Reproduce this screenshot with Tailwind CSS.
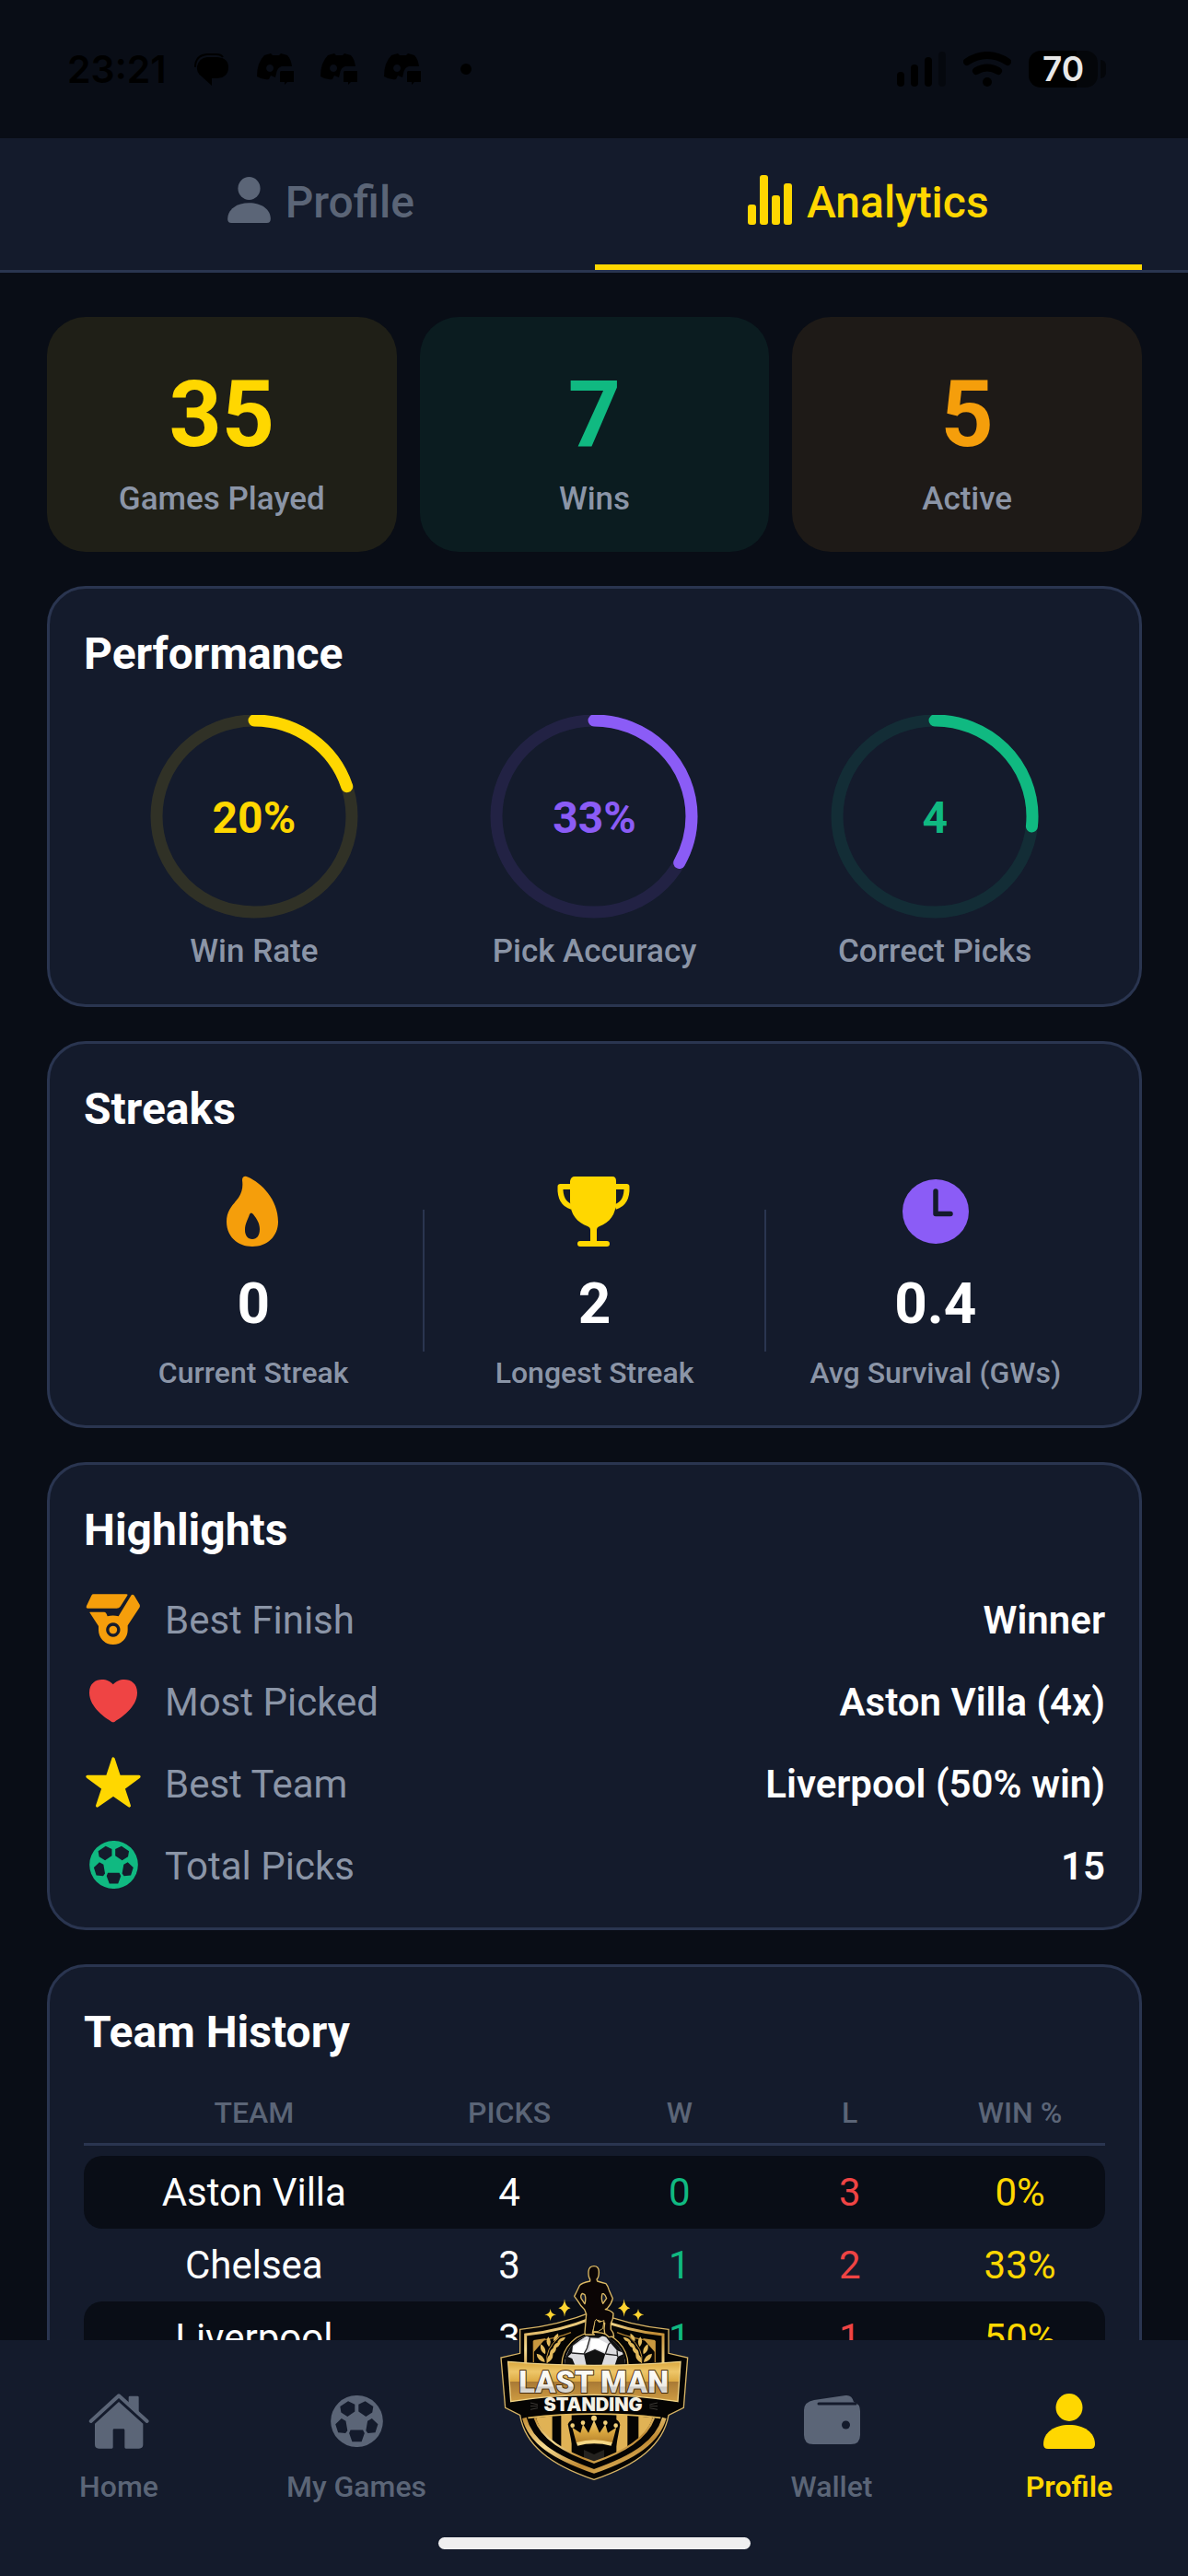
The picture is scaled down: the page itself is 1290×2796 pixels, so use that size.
<!DOCTYPE html>
<html lang="en">
<head>
  <meta charset="UTF-8">
  <meta name="viewport" content="width=device-width, initial-scale=1.0">
  <title>Last Man Standing - Analytics</title>
  <script src="https://cdn.jsdelivr.net/npm/@tailwindcss/browser@4"></script>
</head>
<body class="bg-[#090d16] font-['Roboto',sans-serif] text-white">

<!-- shared icons -->
<svg class="hidden">
  <symbol id="person" viewBox="0 0 56 60">
    <ellipse cx="28" cy="15" rx="14.5" ry="15"/>
    <path d="M0 55C0 42 12 34 28 34S56 42 56 55Q56 60 51 60H5Q0 60 0 55Z"/>
  </symbol>
  <symbol id="ball" viewBox="111 863 156 154">
    <path fill-rule="evenodd" d="M111 940a78 77 0 1 0 156 0a78 77 0 1 0 -156 0Z
      M163 880L183 890V911L161 926L142 914L139 896Z
      M214 880L194 890V911L216 926L235 914L238 896Z
      M125 949L143 932L156 939L161 968L155 976L133 974Z
      M252 949L234 932L221 939L216 968L222 976L244 974Z
      M170 966H207L212 976L203 1001H175L166 976Z"/>
  </symbol>
  <symbol id="chat-app" viewBox="0 0 41 34">
    <path d="M8 2L15 0L17 2H24L26 0L33 2Q37 6 38 14H27Q22 15 21 22L20 26L15 24L13 28Q6 29 0 25Q0 10 8 2ZM14 12a4 4 0 1 0 .1 0Z" fill-rule="evenodd"/>
    <path d="M26 19H40V31H33L30 34V31H25V20Z"/>
  </symbol>
</svg>

<div class="flex h-screen flex-col">

  <!-- status bar -->
  <div class="flex h-[150px] shrink-0 items-center justify-between pr-[89px] pl-[73px] font-['Inter',sans-serif] text-black">
    <div class="flex items-center">
      <span class="w-[138px] text-[41px] leading-[50px] font-semibold">23:21</span>
      <svg class="mr-[31px] h-[35px] w-[37px]" viewBox="0 0 37 35" fill="currentColor">
        <path d="M14 4H25Q37 5 37 15Q37 26 25 27H19V35L8 25Q2 21 3 14Q5 5 14 4Z"/>
        <path d="M1 15Q1 2 14 1H24Q29 1 31 4" fill="none" stroke="currentColor" stroke-width="2"/>
      </svg>
      <svg class="mr-7 h-[34px] w-[41px]" fill="currentColor"><use href="#chat-app"/></svg>
      <svg class="mr-7 h-[34px] w-[41px]" fill="currentColor"><use href="#chat-app"/></svg>
      <svg class="mr-[42px] h-[34px] w-[41px]" fill="currentColor"><use href="#chat-app"/></svg>
      <span class="size-3 rounded-full bg-black"></span>
    </div>
    <div class="flex items-center">
      <svg class="mr-[18px] h-[38px] w-[54px]" viewBox="0 0 54 38">
        <rect x="0" y="22" width="8" height="16" rx="4"/>
        <rect x="15" y="14" width="8" height="24" rx="4"/>
        <rect x="30" y="6" width="8" height="32" rx="4"/>
        <rect x="45" y="0" width="8" height="38" rx="4" fill-opacity=".35"/>
      </svg>
      <svg class="mr-[19px] h-[38px] w-[52px]" viewBox="0 0 52 38" fill="none" stroke="#000" stroke-width="8" stroke-linecap="round">
        <path d="M4 11Q26 -3 48 11M14 21Q26 14 38 21"/>
        <circle cx="26" cy="33" r="5" fill="#000" stroke="none"/>
      </svg>
      <span class="flex h-10 w-[75px] items-center justify-center rounded-[13px] bg-linear-to-r from-black from-70% to-[#04060a] to-70% text-[37px] leading-10 font-semibold text-[#e8e8e8]">70</span>
      <span class="ml-[3px] h-5 w-[6px] rounded-r-full bg-[#04060a]"></span>
    </div>
  </div>

  <!-- tabs -->
  <div class="flex shrink-0 border-b-3 border-[#2a3550] bg-[#141b2c] pr-[50px] pl-[51px]">
    <button class="flex flex-1 items-center justify-center gap-4 border-b-6 border-transparent pt-9 pb-[33px] text-[48px] leading-[68px] font-medium text-[#5b6577]">
      <svg class="mb-1.5 h-[50px] w-[47px]" fill="currentColor"><use href="#person"/></svg>
      Profile
    </button>
    <button class="flex flex-1 items-center justify-center gap-4 border-b-6 border-[#ffd700] pt-9 pb-[33px] text-[48px] leading-[68px] font-medium text-[#ffd700]">
      <svg class="mb-1.5 h-[54px] w-[48px]" viewBox="0 0 48 54" fill="currentColor">
        <rect x="0" y="32" width="9" height="22" rx="3"/>
        <rect x="13" y="0" width="9" height="54" rx="3"/>
        <rect x="26" y="22" width="9" height="32" rx="3"/>
        <rect x="39" y="9" width="9" height="45" rx="3"/>
      </svg>
      Analytics
    </button>
  </div>

  <main class="min-h-0 flex-1 space-y-[37px] overflow-hidden pt-12 pr-[50px] pl-[51px]">

    <!-- totals -->
    <section class="grid grid-cols-3 gap-[25px] text-center">
      <div class="rounded-[42px] bg-[#1f1f17] py-9">
        <p class="text-[100px] leading-[140px] font-bold text-[#ffd700]">35</p>
        <p class="text-[35px] leading-[43px] font-medium text-[#8b95a7]">Games Played</p>
      </div>
      <div class="rounded-[42px] bg-[#0b1c20] py-9">
        <p class="text-[100px] leading-[140px] font-bold text-[#10b981]">7</p>
        <p class="text-[35px] leading-[43px] font-medium text-[#8b95a7]">Wins</p>
      </div>
      <div class="rounded-[42px] bg-[#1e1a17] py-9">
        <p class="text-[100px] leading-[140px] font-bold text-[#f59e0b]">5</p>
        <p class="text-[35px] leading-[43px] font-medium text-[#8b95a7]">Active</p>
      </div>
    </section>

    <!-- performance -->
    <section class="rounded-[42px] border-3 border-[#2a3550] bg-[#141b2c] p-[37px]">
      <h2 class="mb-8 text-[48px] leading-[68px] font-bold">Performance</h2>
      <div class="grid grid-cols-3 text-center">
        <div class="flex flex-col items-center">
          <div class="grid place-items-center text-[#ffd700]">
            <svg class="col-start-1 row-start-1 h-[221px] w-[226px]" viewBox="0 0 226 221" fill="none" stroke="currentColor" stroke-width="13">
              <ellipse cx="113" cy="110" rx="106" ry="104" stroke-opacity=".12"/>
              <path d="M113 6A106 104 0 0 1 219 110A106 104 0 0 1 113 214A106 104 0 0 1 7 110A106 104 0 0 1 113 6" pathLength="100" stroke-dasharray="20 100" stroke-linecap="round"/>
            </svg>
            <span class="col-start-1 row-start-1 pt-[3px] text-[48px] font-bold">20%</span>
          </div>
          <p class="mt-[15px] text-[35px] leading-[41px] font-medium text-[#8b95a7]">Win Rate</p>
        </div>
        <div class="flex flex-col items-center">
          <div class="grid place-items-center text-[#8b5cf6]">
            <svg class="col-start-1 row-start-1 h-[221px] w-[226px]" viewBox="0 0 226 221" fill="none" stroke="currentColor" stroke-width="13">
              <ellipse cx="113" cy="110" rx="106" ry="104" stroke-opacity=".12"/>
              <path d="M113 6A106 104 0 0 1 219 110A106 104 0 0 1 113 214A106 104 0 0 1 7 110A106 104 0 0 1 113 6" pathLength="100" stroke-dasharray="33 100" stroke-linecap="round"/>
            </svg>
            <span class="col-start-1 row-start-1 pt-[3px] text-[48px] font-bold">33%</span>
          </div>
          <p class="mt-[15px] text-[35px] leading-[41px] font-medium text-[#8b95a7]">Pick Accuracy</p>
        </div>
        <div class="flex flex-col items-center">
          <div class="grid place-items-center text-[#10b981]">
            <svg class="col-start-1 row-start-1 h-[221px] w-[226px]" viewBox="0 0 226 221" fill="none" stroke="currentColor" stroke-width="13">
              <ellipse cx="113" cy="110" rx="106" ry="104" stroke-opacity=".12"/>
              <path d="M113 6A106 104 0 0 1 219 110A106 104 0 0 1 113 214A106 104 0 0 1 7 110A106 104 0 0 1 113 6" pathLength="100" stroke-dasharray="26.7 100" stroke-linecap="round"/>
            </svg>
            <span class="col-start-1 row-start-1 pt-[3px] text-[48px] font-bold">4</span>
          </div>
          <p class="mt-[15px] text-[35px] leading-[41px] font-medium text-[#8b95a7]">Correct Picks</p>
        </div>
      </div>
    </section>

    <!-- streaks -->
    <section class="rounded-[42px] border-3 border-[#2a3550] bg-[#141b2c] p-[37px]">
      <h2 class="mb-8 text-[48px] leading-[68px] font-bold">Streaks</h2>
      <div class="flex items-center text-center">
        <div class="flex flex-1 flex-col items-center">
          <svg class="size-[90px]" viewBox="0 0 90 90" fill="#f59e0b">
            <path fill-rule="evenodd" d="M33 11C33 7 36 6 39 7.5C54 14 72 32 72 56C72 72 60 83 44 83C28 83 16 72 16 56C16 43 24 37 29 30C33 24 34 18 33 11ZM41 48C39 54 36 58 36 65C36 71 39 75 44 75C49 75 52 71 52 64C52 58 49 53 45 48Q42.500 45 41 48Z"/>
          </svg>
          <p class="mt-5 text-[62px] leading-[70px] font-bold">0</p>
          <p class="mt-5 text-[32px] leading-10 font-medium text-[#8b95a7]">Current Streak</p>
        </div>
        <div class="h-[154px] w-[2px] bg-[#2a3550]"></div>
        <div class="flex flex-1 flex-col items-center">
          <svg class="size-[90px]" viewBox="0 0 90 90" fill="#ffd700">
            <path d="M24 7H65Q69 7 69 12V34C69 48 62 57 51 61Q48 62 48 65V77H59Q62 77 62 80T59 83H30Q27 83 27 80T30 77H41V65Q41 62 38 61C27 57 19 48 19 34V12Q20 7 24 7Z"/>
            <path d="M20 18H8.500C8 29 11 37 21 40M68 18H80.500C81 29 78 37 68 40" fill="none" stroke="#ffd700" stroke-width="6" stroke-linejoin="round"/>
          </svg>
          <p class="mt-5 text-[62px] leading-[70px] font-bold">2</p>
          <p class="mt-5 text-[32px] leading-10 font-medium text-[#8b95a7]">Longest Streak</p>
        </div>
        <div class="h-[154px] w-[2px] bg-[#2a3550]"></div>
        <div class="flex flex-1 flex-col items-center">
          <svg class="size-[90px]" viewBox="0 0 90 90">
            <ellipse cx="45" cy="45" rx="36" ry="35" fill="#8b5cf6"/>
            <path d="M45 23V47.500H61" fill="none" stroke="#141b2c" stroke-width="5.500" stroke-linecap="round" stroke-linejoin="round"/>
          </svg>
          <p class="mt-5 text-[62px] leading-[70px] font-bold">0.4</p>
          <p class="mt-5 text-[32px] leading-10 font-medium text-[#8b95a7]">Avg Survival (GWs)</p>
        </div>
      </div>
    </section>

    <!-- highlights -->
    <section class="rounded-[42px] border-3 border-[#2a3550] bg-[#141b2c] px-[37px] pt-[37px] pb-[34px]">
      <h2 class="mb-8 text-[48px] leading-[68px] font-bold">Highlights</h2>
      <dl class="space-y-[25px] text-[42px] leading-[64px]">
        <div class="flex items-center">
          <svg class="mr-6 size-[64px]" viewBox="93 51 192 192" fill="#f59e0b">
            <path d="M125 61H232Q238 61 234 67L212 101Q208 107 200 107H106Q99 107 102 99L118 65Q120 61 125 61Z"/>
            <path fill-rule="evenodd" d="M248 64Q252 60 257 65L275 95Q277 100 274 105L236 163V178A47.500 47 0 0 1 141 178V165L112 121Q111 119 114 119H160Q164 119 167 125L170 133Q188 128 206 133ZM188.500 154a23 23 0 1 0 .1 0ZM188.500 164a13 13 0 1 1 -.1 0Z"/>
          </svg>
          <dt class="flex-1 text-[#8b95a7]">Best Finish</dt>
          <dd class="font-semibold">Winner</dd>
        </div>
        <div class="flex items-center">
          <svg class="mr-6 size-[64px]" viewBox="93 318 192 192" fill="#ef4444">
            <path d="M188.500 355C170 330 111 330 111 382C111 430 165 465 183 476Q188.500 479 194 476C212 465 267 430 267 382C267 330 207 330 188.500 355Z"/>
          </svg>
          <dt class="flex-1 text-[#8b95a7]">Most Picked</dt>
          <dd class="font-semibold">Aston Villa (4x)</dd>
        </div>
        <div class="flex items-center">
          <svg class="mr-6 size-[64px]" viewBox="93 585 192 192" fill="#ffd700" stroke="#ffd700" stroke-width="10" stroke-linejoin="round">
            <path d="M189 597L208 655H273L222 693L241 750L189 714L137 750L156 693L105 655H170Z"/>
          </svg>
          <dt class="flex-1 text-[#8b95a7]">Best Team</dt>
          <dd class="font-semibold">Liverpool (50% win)</dd>
        </div>
        <div class="flex items-center">
          <span class="mr-6 flex size-[64px] justify-center pt-1">
            <svg class="h-[52px] w-[53px]" fill="#10b981"><use href="#ball"/></svg>
          </span>
          <dt class="flex-1 text-[#8b95a7]">Total Picks</dt>
          <dd class="font-semibold">15</dd>
        </div>
      </dl>
    </section>

    <!-- team history -->
    <section class="rounded-[42px] border-3 border-[#2a3550] bg-[#141b2c] p-[37px]">
      <h2 class="mb-[30px] text-[48px] leading-[68px] font-bold">Team History</h2>
      <table class="w-full table-fixed border-separate border-spacing-0 text-center">
        <thead class="text-[32px] leading-[46px] text-[#5b6577]">
          <tr>
            <th class="w-1/3 border-b-3 border-[#2a3550] pb-[10px] font-medium">TEAM</th>
            <th class="w-1/6 border-b-3 border-[#2a3550] pb-[10px] font-medium">PICKS</th>
            <th class="w-1/6 border-b-3 border-[#2a3550] pb-[10px] font-medium">W</th>
            <th class="w-1/6 border-b-3 border-[#2a3550] pb-[10px] font-medium">L</th>
            <th class="w-1/6 border-b-3 border-[#2a3550] pb-[10px] font-medium">WIN %</th>
          </tr>
        </thead>
        <tbody class="text-[42px] leading-[79px] before:block before:h-[11px] before:content-['']">
          <tr>
            <td class="rounded-l-[20px] bg-[#090d16]">Aston Villa</td>
            <td class="bg-[#090d16]">4</td>
            <td class="bg-[#090d16] text-[#10b981]">0</td>
            <td class="bg-[#090d16] text-[#ef4444]">3</td>
            <td class="rounded-r-[20px] bg-[#090d16] text-[#ffd700]">0%</td>
          </tr>
          <tr>
            <td>Chelsea</td>
            <td>3</td>
            <td class="text-[#10b981]">1</td>
            <td class="text-[#ef4444]">2</td>
            <td class="text-[#ffd700]">33%</td>
          </tr>
          <tr>
            <td class="rounded-l-[20px] bg-[#090d16]">Liverpool</td>
            <td class="bg-[#090d16]">3</td>
            <td class="bg-[#090d16] text-[#10b981]">1</td>
            <td class="bg-[#090d16] text-[#ef4444]">1</td>
            <td class="rounded-r-[20px] bg-[#090d16] text-[#ffd700]">50%</td>
          </tr>
        </tbody>
      </table>
    </section>
  </main>

  <!-- bottom navigation -->
  <nav class="relative shrink-0 bg-[#141b2c] pt-[52px] pb-[29px]">
    <div class="grid grid-cols-5 text-center text-[32px] leading-10 font-medium text-[#5b6577]">
      <a href="#" class="flex flex-col items-center gap-[15px]">
        <svg class="size-[72px]" viewBox="97 66 216 216" fill="currentColor">
          <path d="M114 174L205 91L297 174" fill="none" stroke="currentColor" stroke-width="12" stroke-linecap="round" stroke-linejoin="round"/>
          <path d="M237 113V96Q237 92 241 92H266Q270 92 270 96V146Z"/>
          <path d="M127 182L205 111L284 182V250Q284 263 271 263H228Q224 263 224 259V203Q224 199 220 199H190Q186 199 186 203V259Q186 263 182 263H140Q127 263 127 250Z"/>
        </svg>
        Home
      </a>
      <a href="#" class="flex flex-col items-center gap-[15px]">
        <span class="flex size-[72px] items-center justify-center">
          <svg class="h-14 w-[57px]" fill="currentColor"><use href="#ball"/></svg>
        </span>
        My Games
      </a>
      <a href="#" aria-label="Last Man Standing"></a>
      <a href="#" class="flex flex-col items-center gap-[15px]">
        <svg class="size-[72px]" viewBox="-6 -8 72 72" fill="currentColor">
          <path d="M0 16Q0 7 11 5L45 0Q52 -1 54 7Q61 9 61 17V43Q61 53 51 53H10Q0 53 0 43Z"/>
          <path d="M16 9H56" stroke="#141b2c" stroke-width="3" stroke-linecap="round"/>
          <circle cx="45.500" cy="32" r="4.500" fill="#141b2c"/>
        </svg>
        Wallet
      </a>
      <a href="#" class="flex flex-col items-center gap-[15px] font-semibold text-[#ffd700]">
        <span class="flex size-[72px] items-center justify-center">
          <svg class="h-[60px] w-14" fill="currentColor"><use href="#person"/></svg>
        </span>
        Profile
      </a>
    </div>
    <div class="mx-auto mt-[35px] h-[13px] w-[339px] rounded-full bg-[#efeff0]"></div>

    <!-- club badge, sticks out above the bar -->
    <svg class="pointer-events-none absolute -top-[100px] left-1/2 h-[270px] w-[250px] -translate-x-1/2" viewBox="0 0 750 810">
      <defs>
        <linearGradient id="gold" x1="0" y1="0" x2="0" y2="1">
          <stop offset="0" stop-color="#f3d27c"/><stop offset=".5" stop-color="#d9a63f"/><stop offset="1" stop-color="#b5812b"/>
        </linearGradient>
        <linearGradient id="rim" x1="0" y1="0" x2="1" y2="1">
          <stop offset="0" stop-color="#c48f37"/><stop offset=".35" stop-color="#f6dc92"/><stop offset=".65" stop-color="#c08a33"/><stop offset="1" stop-color="#f0cf7c"/>
        </linearGradient>
        <linearGradient id="banner" x1="0" y1="0" x2="0" y2="1">
          <stop offset="0" stop-color="#d9a63c"/><stop offset=".25" stop-color="#eec669"/><stop offset=".5" stop-color="#dca942"/><stop offset=".51" stop-color="#a97a35"/><stop offset="1" stop-color="#cf9c42"/>
        </linearGradient>
        <linearGradient id="silver" x1="0" y1="0" x2="0" y2="1">
          <stop offset=".3" stop-color="#fbfaf5"/><stop offset=".6" stop-color="#efede6"/><stop offset=".65" stop-color="#cfccc6"/><stop offset="1" stop-color="#f0eee8"/>
        </linearGradient>
        <clipPath id="above-banner"><rect x="250" y="260" width="260" height="122"/></clipPath>
        <clipPath id="crest"><path d="M186 553Q375 527 566 553C545 620 470 665 375 697C280 665 205 620 186 553Z"/></clipPath>
      </defs>

      <!-- shield -->
      <path d="M134 265Q255 254 375 206Q495 254 618 265V343L680 357L667 520L618 544C600 640 520 705 375 754C230 705 150 640 134 544L86 520L72 357L134 343Z" fill="#050403" stroke="#d8b566" stroke-width="4"/>
      <path d="M152 375V282Q260 272 375 226Q490 272 600 282V375" fill="none" stroke="url(#rim)" stroke-width="9"/>
      <path d="M178 372V305Q255 294 300 275M574 372V305Q495 294 450 275" fill="none" stroke="#a87a2e" stroke-width="4"/>
      <path d="M178 300L218 294L178 340ZM574 300L534 294L574 340Z" fill="#c9983f"/>

      <!-- laurels -->
      <g fill="#e2b95c">
        <path d="M222 375Q214 330 262 290" fill="none" stroke="#c9983f" stroke-width="3"/>
        <path d="M215 372Q189 366 188 344Q212 348 215 372ZM216 346Q196 334 202 313Q221 325 216 346ZM228 322Q214 306 226 289Q240 304 228 322ZM244 304Q240 288 258 278Q262 294 244 304ZM222 374Q220 348 241 342Q244 364 222 374ZM230 350Q230 328 252 321Q254 342 230 350ZM241 328Q244 309 267 304Q265 324 241 328ZM256 307Q262 291 282 290Q276 307 256 307Z"/>
        <path d="M530 375Q538 330 490 290" fill="none" stroke="#c9983f" stroke-width="3"/>
        <path d="M537 372Q563 366 564 344Q540 348 537 372ZM536 346Q556 334 550 313Q531 325 536 346ZM524 322Q538 306 526 289Q512 304 524 322ZM508 304Q512 288 494 278Q490 294 508 304ZM530 374Q532 348 511 342Q508 364 530 374ZM522 350Q522 328 500 321Q498 342 522 350ZM511 328Q508 309 485 304Q487 324 511 328ZM496 307Q490 291 470 290Q476 307 496 307Z"/>
      </g>

      <!-- football -->
      <g clip-path="url(#above-banner)">
        <circle cx="378" cy="382" r="108" fill="#050403" stroke="#dfb85f" stroke-width="4"/>
        <circle cx="378" cy="382" r="99" fill="#dcdcdf"/>
        <path d="M342 345L378 330L412 345L400 382H350ZM290 340Q305 300 350 287L330 300L306 318L303 342L280 362ZM345 284Q378 276 405 285L390 293L362 292ZM412 287Q450 303 467 340L450 334L428 308ZM278 384L284 352L304 360L314 384ZM478 384L472 345L452 354L442 384Z" fill="#111"/>
        <path d="M308 322L332 304L358 298L352 325L340 344L306 341Z" fill="#fff"/>
        <path d="M366 296H390L420 312L412 340L378 326L360 334Z" fill="#fff"/>
        <path d="M362 292L352 327L342 345L303 342M412 345L452 350M412 345L422 315L428 308M450 334L452 354" fill="none" stroke="#222" stroke-width="4"/>
      </g>

      <!-- standing man -->
      <path d="M375 59Q391 59 391 78Q391 96 384 102L386 108Q402 113 414 116Q420 122 424 137L436 164Q432 182 418 197L412 200Q428 202 438 213Q438 232 430 245V265Q440 276 440 288L424 290L410 278L408 262L410 244L388 236L378 248L370 276L376 282H346L345 275L350 215L344 200Q332 190 322 172L311 157Q318 143 328 122Q334 114 362 108V102Q356 94 357 76Q359 59 375 59ZM337 148Q330 155 333 164L345 182Q350 165 345 152ZM402 149Q397 165 404 181L416 164Q412 152 406 149Z" fill="#0b0505" fill-rule="evenodd" stroke="#dcb964" stroke-width="4" stroke-linejoin="round"/>
      <path d="M378 238L383 232L391 242L408 236L404 262L388 272H372Z" fill="#050403" stroke="#dcb964" stroke-width="3"/>

      <!-- sparkles -->
      <path d="M279 166Q281 192 299 196Q281 200 279 224Q277 200 259 196Q277 192 279 166ZM233 198Q235 215 252 217Q235 219 233 237Q231 219 214 217Q231 215 233 198ZM473 166Q475 192 493 196Q475 200 473 224Q471 200 453 196Q471 192 473 166ZM519 198Q521 215 538 217Q521 219 519 237Q517 219 500 217Q517 215 519 198Z" fill="#fdd430"/>

      <!-- crest stripes and crown -->
      <g clip-path="url(#crest)">
        <path d="M180 520H239V720H180ZM268 520H302V720H268ZM448 520H484V720H448ZM520 520H570V720H520Z" fill="#e0b255"/>
        <path d="M342 657L375 672L408 657V720H342Z" fill="#24221f"/>
      </g>
      <path d="M290 574Q300 552 325 562L350 565L375 545L402 565L430 562Q455 552 460 576L446 652H306Z" fill="#050403"/>
      <path d="M318 637L304 584L331 602L339 574L357 602L375 560L393 602L412 574L420 602L448 584L434 637Q375 621 318 637Z" fill="url(#gold)"/>
      <path d="M318 633Q375 617 434 633L431 644Q375 630 321 644Z" fill="#f5d785"/>
      <g fill="#f3d27c"><circle cx="305" cy="578" r="7"/><circle cx="339" cy="569" r="7"/><circle cx="375" cy="554" r="9"/><circle cx="412" cy="569" r="7"/><circle cx="446" cy="578" r="7"/></g>
      <path d="M148 553C168 630 240 680 375 727C510 680 582 630 604 553" fill="none" stroke="url(#rim)" stroke-width="14"/>
      <path d="M182 553C205 622 278 664 375 698C472 664 545 622 570 553" fill="none" stroke="url(#rim)" stroke-width="7"/>

      <!-- ribbons -->
      <path d="M86 505L160 488Q375 448 592 488L667 505L618 540L592 546Q375 517 160 546L134 540Z" fill="#050403"/>
      <path d="M160 553Q375 528 592 553" fill="none" stroke="#e2b95c" stroke-width="5"/>
      <path d="M168 504L192 510M168 515H192M168 526L192 521M582 504L556 510M582 515H556M582 526L556 521" stroke="#3d3a36" stroke-width="3"/>
      <path d="M95 370Q375 394 657 370L648 500Q375 456 104 500Z" fill="url(#banner)" stroke="#f2d588" stroke-width="4"/>
      <g font-family="Roboto, sans-serif" font-weight="900" font-size="98" fill="url(#silver)" stroke="#4a2f10" stroke-width="6" paint-order="stroke" stroke-linejoin="round">
        <text x="130" y="470">LAST</text>
        <text x="396" y="470">MAN</text>
      </g>
      <text x="372" y="532" text-anchor="middle" font-family="Inter, sans-serif" font-weight="900" font-size="60" fill="#f4f1e6">STANDING</text>
    </svg>
  </nav>
</div>

</body>
</html>
